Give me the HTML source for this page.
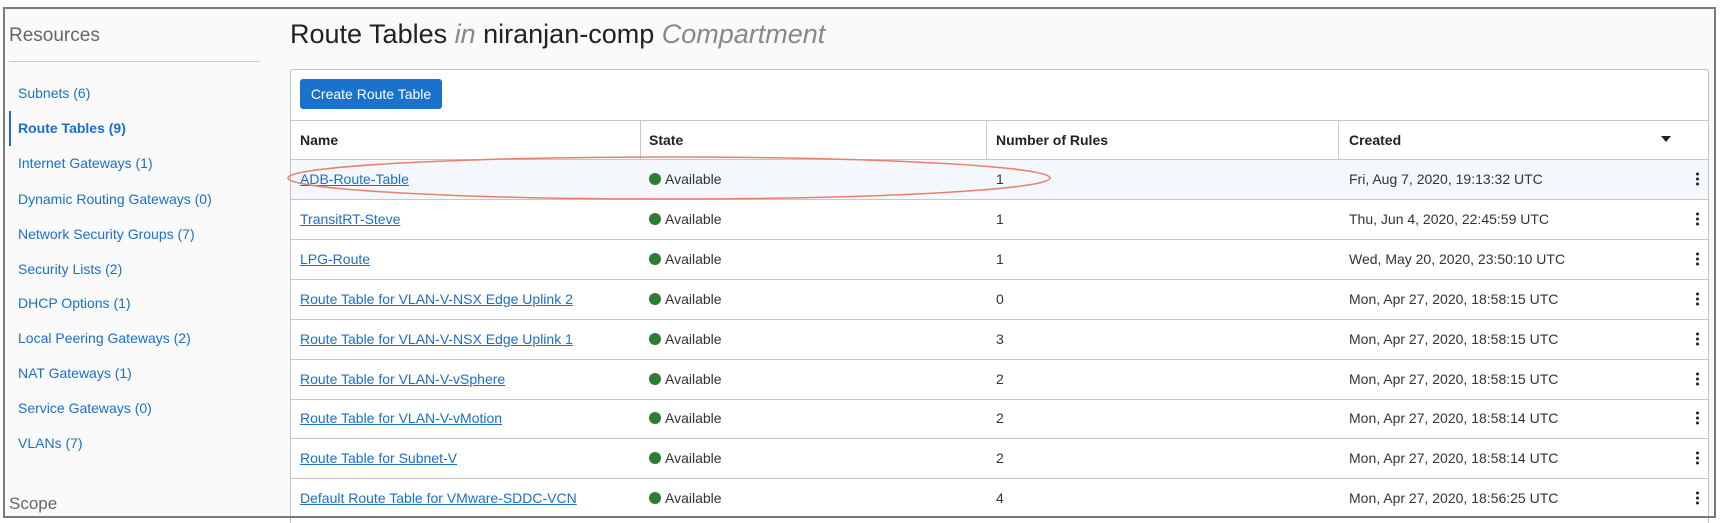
<!DOCTYPE html>
<html style="overflow:hidden;width:1720px;height:523px"><head><meta charset="utf-8"><style>
*{margin:0;padding:0;box-sizing:border-box}
body{width:1720px;height:523px;background:#fff;font-family:"Liberation Sans",Arial,sans-serif;position:relative;overflow:hidden;color:#333}
.bg{position:absolute;left:3px;top:7px;width:1712px;height:510px;background:#fafafa}
.frame{position:absolute;left:3px;top:7px;width:1713px;height:511px;border:2px solid #7a7a7a;pointer-events:none;z-index:5}
.res{position:absolute;left:9px;top:25px;font-size:19px;color:#666;font-weight:300}
.div{position:absolute;left:9px;top:61px;width:251px;height:1px;background:#c8c8c8}
.nav{position:absolute;left:18px;font-size:14px;color:#1a6fc9;transform:translateY(-50%)}
.bar{position:absolute;left:9px;top:111px;width:2px;height:35px;background:#1a6fc9}
.scope{position:absolute;left:9px;top:494px;font-size:17px;color:#666}
.title{position:absolute;left:290px;top:19px;font-size:27px;color:#222;white-space:nowrap}
.title i{color:#888}
.panel{position:absolute;left:290px;top:69px;width:1419px;height:454px;background:#fff;border:1px solid #bfc3c8;border-bottom:none;border-radius:3px 3px 0 0}
.btn{position:absolute;left:300px;top:79px;width:142px;height:30px;background:#1a72cc;border-radius:3px;color:#fff;font-size:14px;line-height:30px;text-align:center}
.hl{position:absolute;left:291px;width:1417px;height:1px;background:#c4c8cd}
.vl{position:absolute;top:120px;width:1px;height:39px;background:#c4c8cd}
.th{position:absolute;top:132px;font-size:14px;font-weight:bold;color:#222}
.cell{position:absolute;font-size:14px;color:#333;white-space:nowrap;transform:translateY(-50%)}
.cell a{color:#1a6fc9;text-decoration:underline}
.dot{position:absolute;width:12px;height:12px;border-radius:50%;background:#2e7d32;transform:translateY(-50%)}
.keb{position:absolute;left:1696px;width:3px;transform:translateY(-50%)}
.keb span{display:block;width:3px;height:3px;background:#222;border-radius:50%;margin-bottom:2px}
</style></head><body>
<div class="bg"></div>
<div class="res">Resources</div>
<div class="div"></div>
<div class="bar"></div>
<div class="nav" style="top:93px">Subnets (6)</div>
<div class="nav" style="top:128px;font-weight:bold">Route Tables (9)</div>
<div class="nav" style="top:163px">Internet Gateways (1)</div>
<div class="nav" style="top:199px">Dynamic Routing Gateways (0)</div>
<div class="nav" style="top:234px">Network Security Groups (7)</div>
<div class="nav" style="top:269px">Security Lists (2)</div>
<div class="nav" style="top:303px">DHCP Options (1)</div>
<div class="nav" style="top:338px">Local Peering Gateways (2)</div>
<div class="nav" style="top:373px">NAT Gateways (1)</div>
<div class="nav" style="top:408px">Service Gateways (0)</div>
<div class="nav" style="top:443px">VLANs (7)</div>
<div class="scope">Scope</div>
<div class="title">Route Tables <i>in</i> niranjan-comp <i>Compartment</i></div>
<div class="panel"></div>
<div class="btn">Create Route Table</div>
<div class="hl" style="top:120px"></div>
<div class="hl" style="top:159px"></div>
<div style="position:absolute;left:291px;top:160px;width:1417px;height:39px;background:#f4f7fb"></div>
<div class="vl" style="left:640px"></div><div class="vl" style="left:986px"></div><div class="vl" style="left:1338px"></div>
<div class="th" style="left:300px">Name</div>
<div class="th" style="left:649px">State</div>
<div class="th" style="left:996px">Number of Rules</div>
<div class="th" style="left:1349px">Created</div>
<div style="position:absolute;left:1661px;top:136px;width:0;height:0;border-left:5px solid transparent;border-right:5px solid transparent;border-top:6px solid #222"></div>
<div id="rows"></div>
<svg style="position:absolute;left:0;top:0;z-index:4" width="1720" height="523"><ellipse cx="669" cy="178" rx="381" ry="21" fill="none" stroke="#e8806e" stroke-width="1.5"/></svg>
<div class="frame"></div>
<script>
var d=[["ADB-Route-Table","1","Fri, Aug 7, 2020, 19:13:32 UTC"],["TransitRT-Steve","1","Thu, Jun 4, 2020, 22:45:59 UTC"],["LPG-Route","1","Wed, May 20, 2020, 23:50:10 UTC"],["Route Table for VLAN-V-NSX Edge Uplink 2","0","Mon, Apr 27, 2020, 18:58:15 UTC"],["Route Table for VLAN-V-NSX Edge Uplink 1","3","Mon, Apr 27, 2020, 18:58:15 UTC"],["Route Table for VLAN-V-vSphere","2","Mon, Apr 27, 2020, 18:58:15 UTC"],["Route Table for VLAN-V-vMotion","2","Mon, Apr 27, 2020, 18:58:14 UTC"],["Route Table for Subnet-V","2","Mon, Apr 27, 2020, 18:58:14 UTC"],["Default Route Table for VMware-SDDC-VCN","4","Mon, Apr 27, 2020, 18:56:25 UTC"]];
var h="";
for(var i=0;i<d.length;i++){var c=179+i*39.9;var b=c+20;
h+='<div class="cell" style="left:300px;top:'+c+'px"><a>'+d[i][0]+'</a></div>';
h+='<div class="dot" style="left:649px;top:'+c+'px"></div>';
h+='<div class="cell" style="left:665px;top:'+c+'px">Available</div>';
h+='<div class="cell" style="left:996px;top:'+c+'px">'+d[i][1]+'</div>';
h+='<div class="cell" style="left:1349px;top:'+c+'px">'+d[i][2]+'</div>';
h+='<div class="keb" style="top:'+(c+1)+'px"><span></span><span></span><span></span></div>';
if(i<d.length-1)h+='<div class="hl" style="top:'+b+'px"></div>';}
document.getElementById("rows").innerHTML=h;
</script>
</body></html>
